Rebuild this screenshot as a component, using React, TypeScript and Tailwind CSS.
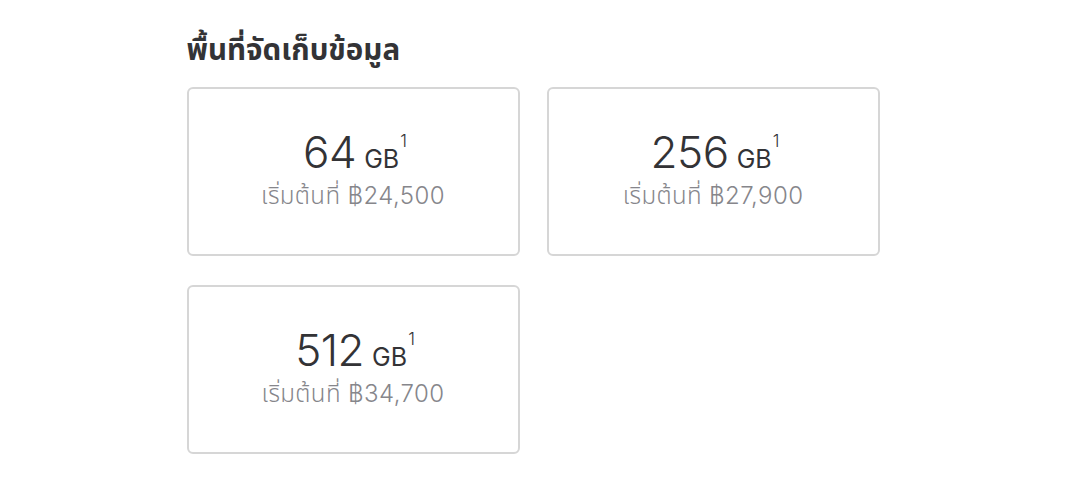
const plans = [
  { size: "64", price: "฿24,500" },
  { size: "256", price: "฿27,900" },
  { size: "512", price: "฿34,700" },
];

const App = () => {
  return (
    <div className="w-screen h-screen bg-white font-['Inter','Noto_Sans_Thai','Noto_Sans',sans-serif]">
      <div className="w-[693px] mx-auto pt-[30px]">
        <h2 className="text-[29.5px] leading-[40px] font-bold text-[#333336] font-['Liberation_Sans','Noto_Sans_Thai','Noto_Sans',sans-serif]">
          พื้นที่จัดเก็บข้อมูล
        </h2>
        <div className="grid grid-cols-2 gap-x-[27px] gap-y-[29px] mt-[17px]">
          {plans.map((p) => (
            <div
              key={p.size}
              className="h-[169px] border-2 border-[#d6d6d6] rounded-[6px] flex flex-col items-center justify-center pb-[4px]"
            >
              <div className="flex items-baseline text-[#333336] ml-[4px]">
                <span className="text-[44px] leading-[48px] font-light tracking-[-0.5px]">{p.size}</span>
                <span className="text-[25px] ml-[8px] font-normal">GB</span>
                <span className="text-[17px] font-light leading-none relative -top-[21px] ml-[1px]">1</span>
              </div>
              <div className="text-[24px] leading-[30px] text-[#86868b] mt-[2px] font-light tracking-[0.4px]">
                เริ่มต้นที่ {p.price}
              </div>
            </div>
          ))}
        </div>
      </div>
    </div>
  );
};

export default App;
